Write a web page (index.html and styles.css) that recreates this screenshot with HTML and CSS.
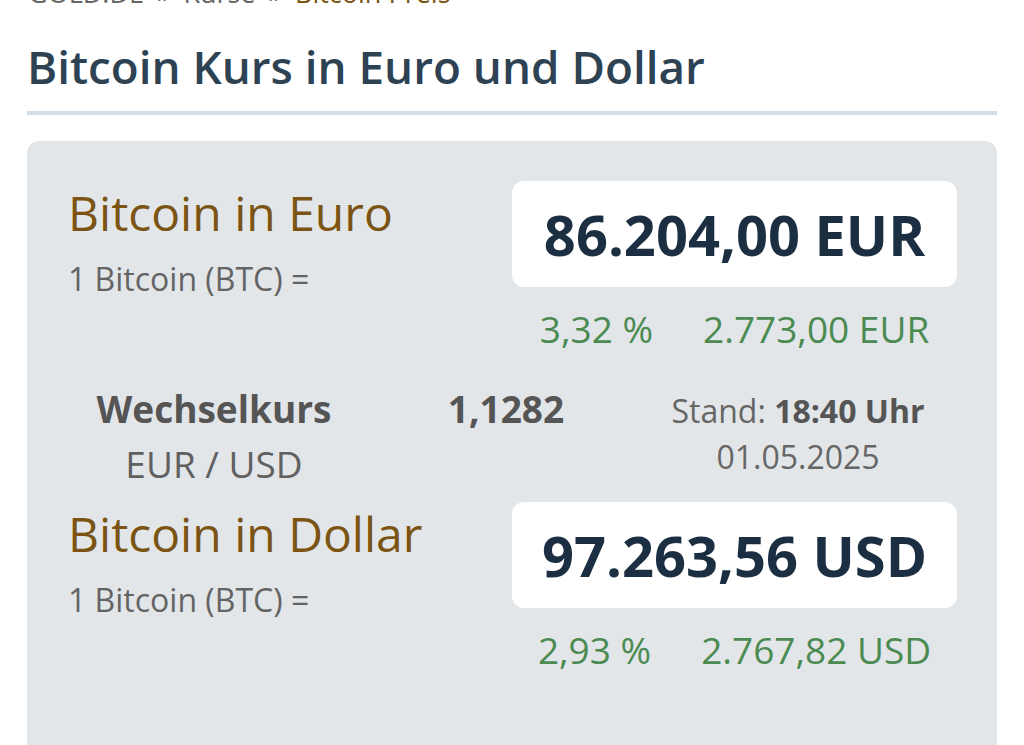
FILE: index.html
```html
<!DOCTYPE html>
<html lang="de">
<head>
    <meta charset="UTF-8">
    <title>Bitcoin Kurs in Euro und Dollar</title>
    <link rel="stylesheet" href="styles.css">
</head>
<body>
<div class="page">
    <div class="breadcrumb">
        <a href="#">GOLD.DE</a><span class="sep">»</span><a href="#">Kurse</a><span class="sep">»</span><span class="current">Bitcoin Preis</span>
    </div>

    <h1 class="page-title">Bitcoin Kurs in Euro und Dollar</h1>

    <div class="rate-card">
        <!-- Euro -->
        <div class="quote-row">
            <div class="quote-label">
                <div class="quote-title">Bitcoin in Euro</div>
                <div class="quote-sub">1 Bitcoin (BTC) =</div>
            </div>
            <div class="quote-value">
                <div class="price-box">86.204,00 EUR</div>
                <div class="change-row">
                    <span>3,32 %</span>
                    <span>2.773,00 EUR</span>
                </div>
            </div>
        </div>

        <!-- Wechselkurs -->
        <div class="exchange-row">
            <div class="exchange-col">
                <div class="exchange-name">Wechselkurs</div>
                <div class="exchange-pair">EUR / USD</div>
            </div>
            <div class="exchange-col">
                <div class="exchange-rate">1,1282</div>
            </div>
            <div class="exchange-col exchange-time">
                <div>Stand: <b>18:40 Uhr</b></div>
                <div>01.05.2025</div>
            </div>
        </div>

        <!-- Dollar -->
        <div class="quote-row">
            <div class="quote-label">
                <div class="quote-title">Bitcoin in Dollar</div>
                <div class="quote-sub">1 Bitcoin (BTC) =</div>
            </div>
            <div class="quote-value">
                <div class="price-box">97.263,56 USD</div>
                <div class="change-row">
                    <span>2,93 %</span>
                    <span>2.767,82 USD</span>
                </div>
            </div>
        </div>
    </div>
</div>
</body>
</html>
```

FILE: styles.css
```css
body, html {
    margin: 0;
    padding: 0;
}
body {
    background: #fff;
    font-family: "Open Sans", "Noto Sans", sans-serif;
    color: #333;
    overflow: hidden;
}
.page {
    padding: 0 27px;
}

/* Brotkrumen */
.breadcrumb {
    margin-top: -27px;
    font-size: 27px;
    line-height: 40px;
    color: #666;
    padding-left: 1px;
}
.breadcrumb a {
    color: #666;
    text-decoration: none;
}
.breadcrumb .sep {
    padding: 0 13px;
}
.breadcrumb .current {
    color: #7b5413;
}

/* Titel */
.page-title {
    margin: 24px 0 0 0;
    padding: 0 0 14px 0;
    font-size: 45.8px;
    font-weight: 600;
    line-height: 1.3;
    color: #2d4253;
    border-bottom: 4px solid #d3dfe8;
}

/* Kurs-Karte */
.rate-card {
    margin-top: 26px;
    background: #e3e6e9;
    border-radius: 12px;
    padding: 40px 40px 0 41px;
    min-height: 700px;
}
.quote-row {
    display: flex;
    justify-content: space-between;
}
.quote-label {
    padding-top: 3px;
}
.quote-title {
    font-size: 48px;
    line-height: 1.2;
    color: #7b5413;
}
.quote-sub {
    margin-top: 14px;
    font-size: 32px;
    line-height: 1.5;
    color: #646464;
}
.quote-value {
    width: 445px;
}
.price-box {
    height: 106px;
    background: #fff;
    border-radius: 12px;
    display: flex;
    align-items: center;
    justify-content: center;
    font-size: 56px;
    font-weight: 700;
    color: #1b2e42;
}
.change-row {
    margin-top: 14px;
    display: flex;
    justify-content: center;
    gap: 50px;
    font-size: 37px;
    line-height: 1.5;
    color: #4b8b52;
}

/* Wechselkurs */
.exchange-row {
    margin: 27px 13px 12px 0;
    display: grid;
    grid-template-columns: repeat(3, 1fr);
    align-items: baseline;
    text-align: center;
    color: #555;
}
.exchange-name, .exchange-rate {
    font-size: 37px;
    font-weight: 700;
    line-height: 1.4;
}
.exchange-pair {
    margin-top: 3px;
    font-size: 37px;
    line-height: 1.4;
    color: #606060;
}
.exchange-time {
    font-size: 32px;
    line-height: 1.45;
    color: #666;
}
.exchange-time b {
    color: #555;
}
```
